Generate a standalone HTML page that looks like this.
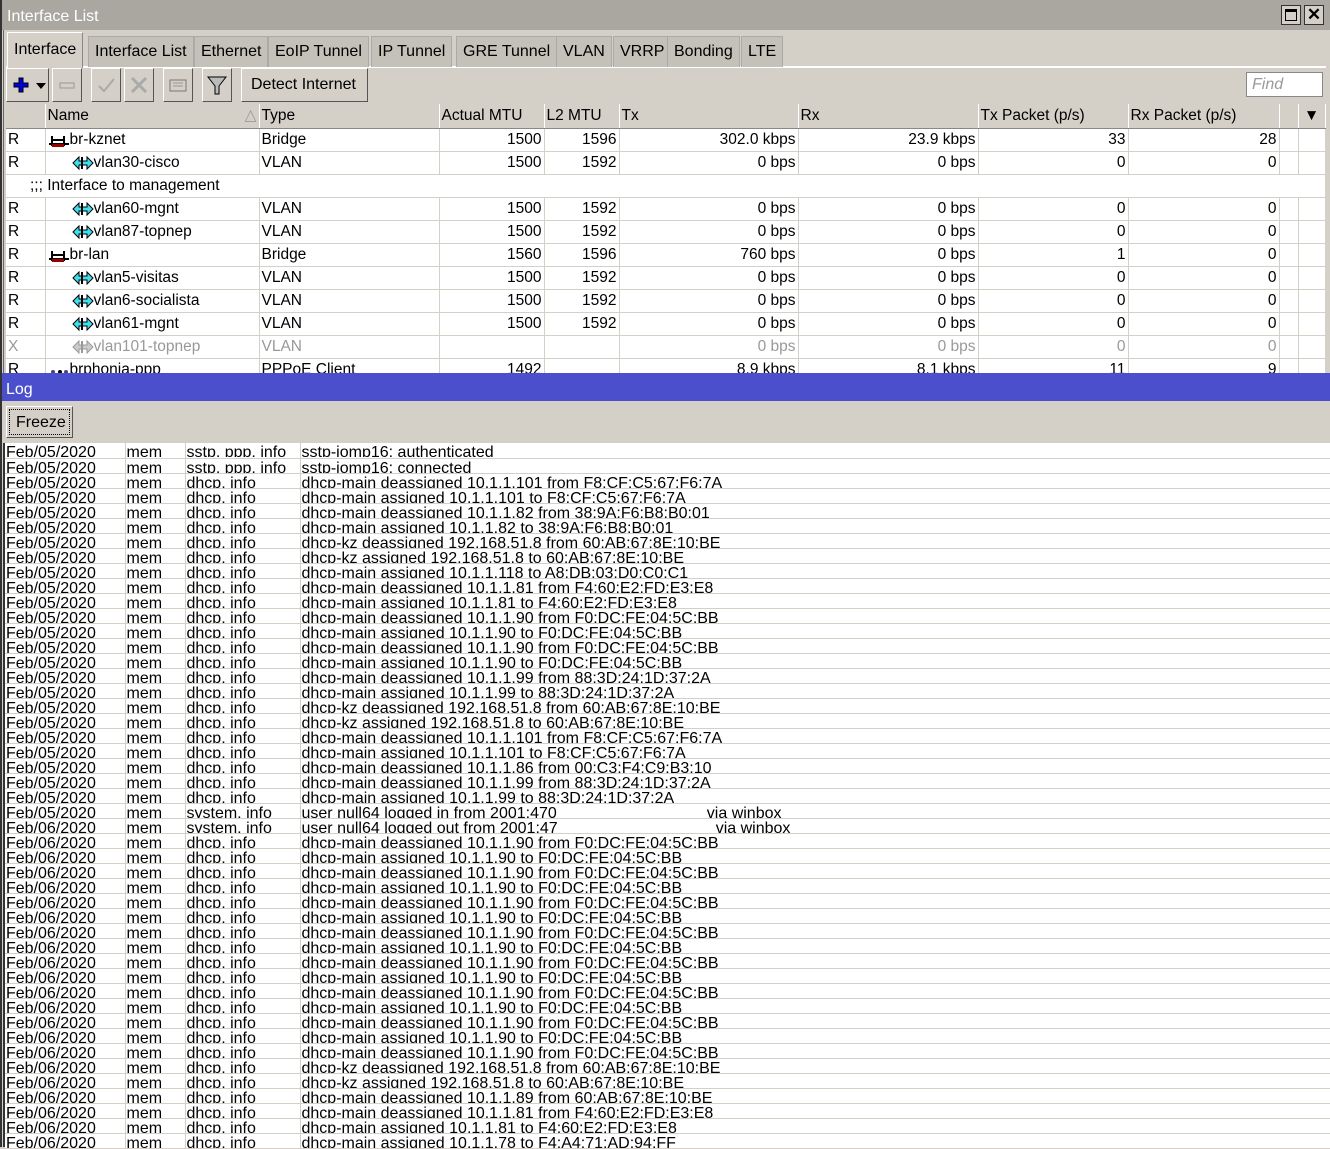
<!DOCTYPE html>
<html><head><meta charset="utf-8"><style>
*{box-sizing:border-box;margin:0;padding:0}
body{width:1330px;height:1147px;overflow:hidden;background:#d4d0c8;font-family:"Liberation Sans",sans-serif;font-size:15.5px;color:#000;position:relative}
.abs{position:absolute}
#title{left:0;top:0;width:1330px;height:30px;background:#a9a7a0;color:#fff;font-size:16px;padding:8px 0 0 7px}
.wb{top:5px;width:20px;height:20px;border:1px solid #333;background:#d4d0c8}
.tab{top:36px;height:31px;background:#c4c1b9;border:1px solid #aaa;border-bottom:none;padding:6px 6px 0;font-size:16px}
.tab.act{top:32px;height:36px;background:#d4d0c8;border-color:#fff #888 transparent #fff;padding-top:8px}
.btn{top:68px;height:34px;border:1px solid #fff;border-right-color:#555;border-bottom-color:#555;background:#d4d0c8}
table{border-collapse:collapse;table-layout:fixed;position:absolute}
#grid td{height:23px;border-right:1px solid #d4d0c8;border-bottom:1px solid #d4d0c8;white-space:nowrap;overflow:hidden;padding:0 2px;background:#fff;line-height:20px}
#grid tr.h td{background:#d4d0c8;border-right:1px solid #fff;border-bottom:1px solid #888;height:24px;line-height:24px}
.r{text-align:right}
.dis td{color:#999}
#log td{height:15px;border-right:1px solid #d4d0c8;border-bottom:1px solid #d4d0c8;white-space:nowrap;overflow:hidden;padding:0 1px;background:#fff;font-size:16px;line-height:19px;vertical-align:top}
#log td div{height:14px;overflow:hidden;line-height:19px}
svg{vertical-align:middle}
</style></head><body>
<div id="title" class="abs">Interface List</div>
<div class="abs wb" style="left:1281px"><div style="margin:3px;width:12px;height:12px;border:1px solid #000;border-top-width:3px"></div></div>
<div class="abs wb" style="left:1304px;font-size:17px;font-weight:bold;text-align:center;line-height:17px">✕</div>
<div class="abs" style="left:6px;top:66px;width:1320px;height:2px;background:#fff"></div>
<div class="abs tab act" style="left:7px">Interface</div>
<div class="abs tab" style="left:88px">Interface List</div>
<div class="abs tab" style="left:194px">Ethernet</div>
<div class="abs tab" style="left:268px">EoIP Tunnel</div>
<div class="abs tab" style="left:371px">IP Tunnel</div>
<div class="abs tab" style="left:456px">GRE Tunnel</div>
<div class="abs tab" style="left:556px">VLAN</div>
<div class="abs tab" style="left:613px">VRRP</div>
<div class="abs tab" style="left:667px">Bonding</div>
<div class="abs tab" style="left:741px">LTE</div>
<div class="abs btn" style="left:6px;width:43px"><svg width="40" height="32"><path d="M12 9h4v5h5v4h-5v5h-4v-5H7v-4h5z" fill="#0000e0" stroke="#000" stroke-width="1"/><path d="M29 14h10l-5 6z" fill="#000"/></svg></div>
<div class="abs btn" style="left:52px;width:30px"><svg width="28" height="32"><rect x="7" y="14" width="14" height="5" fill="none" stroke="#999"/></svg></div>
<div class="abs btn" style="left:91px;width:30px"><svg width="28" height="32"><path d="M7 17l5 5 10-12" fill="none" stroke="#aaa" stroke-width="2"/></svg></div>
<div class="abs btn" style="left:124px;width:30px"><svg width="28" height="32"><path d="M7 9l14 14M21 9L7 23" stroke="#aaa" stroke-width="3"/></svg></div>
<div class="abs btn" style="left:163px;width:30px"><svg width="28" height="32"><rect x="6" y="11" width="16" height="11" fill="none" stroke="#777"/><path d="M9 14h10M9 17h10" stroke="#999"/></svg></div>
<div class="abs btn" style="left:202px;width:30px"><svg width="28" height="32"><path d="M5 8h18l-7 9v8h-4v-8z" fill="#bbb" stroke="#000"/></svg></div>
<div class="abs btn" style="left:241px;width:127px;padding:7px 0 0 9px;font-size:16px">Detect Internet</div>
<div class="abs" style="left:1246px;top:72px;width:77px;height:25px;background:#fff;border:1px solid #888;color:#999;font-style:italic;font-size:16px;padding:3px 5px">Find</div>

<table id="grid" style="left:6px;top:104px;width:1319px">
<colgroup><col width="39"><col width="214"><col width="180"><col width="105"><col width="75"><col width="179"><col width="180"><col width="150"><col width="151"><col width="19"><col width="27"></colgroup>
<tr class="h"><td></td><td>Name<span style="float:right;color:#999">△</span></td><td>Type</td><td>Actual MTU</td><td>L2 MTU</td><td>Tx</td><td>Rx</td><td>Tx Packet (p/s)</td><td>Rx Packet (p/s)</td><td></td><td style="text-align:center">▼</td></tr>
<tr><td>R</td><td><svg width="22" height="14"><path d="M1 11h20M4 3v10M16 3v10M4 7h12" stroke="#000" stroke-width="2" fill="none"/><rect x="4" y="11" width="12" height="3" fill="#900"/></svg>br-kznet</td><td>Bridge</td><td class="r">1500</td><td class="r">1596</td><td class="r">302.0 kbps</td><td class="r">23.9 kbps</td><td class="r">33</td><td class="r">28</td><td></td><td></td></tr>
<tr><td>R</td><td style="padding-left:26px"><svg width="22" height="16"><path d="M1 8l6-6v4h8V2l6 6-6 6v-4H7v4z" fill="#3ee0f0" stroke="#000"/><path d="M10 2v12" stroke="#000" stroke-width="2"/></svg>vlan30-cisco</td><td>VLAN</td><td class="r">1500</td><td class="r">1592</td><td class="r">0 bps</td><td class="r">0 bps</td><td class="r">0</td><td class="r">0</td><td></td><td></td></tr>
<tr><td colspan="11" style="padding-left:24px">;;; Interface to management</td></tr>
<tr><td>R</td><td style="padding-left:26px"><svg width="22" height="16"><path d="M1 8l6-6v4h8V2l6 6-6 6v-4H7v4z" fill="#3ee0f0" stroke="#000"/><path d="M10 2v12" stroke="#000" stroke-width="2"/></svg>vlan60-mgnt</td><td>VLAN</td><td class="r">1500</td><td class="r">1592</td><td class="r">0 bps</td><td class="r">0 bps</td><td class="r">0</td><td class="r">0</td><td></td><td></td></tr>
<tr><td>R</td><td style="padding-left:26px"><svg width="22" height="16"><path d="M1 8l6-6v4h8V2l6 6-6 6v-4H7v4z" fill="#3ee0f0" stroke="#000"/><path d="M10 2v12" stroke="#000" stroke-width="2"/></svg>vlan87-topnep</td><td>VLAN</td><td class="r">1500</td><td class="r">1592</td><td class="r">0 bps</td><td class="r">0 bps</td><td class="r">0</td><td class="r">0</td><td></td><td></td></tr>
<tr><td>R</td><td><svg width="22" height="14"><path d="M1 11h20M4 3v10M16 3v10M4 7h12" stroke="#000" stroke-width="2" fill="none"/><rect x="4" y="11" width="12" height="3" fill="#900"/></svg>br-lan</td><td>Bridge</td><td class="r">1560</td><td class="r">1596</td><td class="r">760 bps</td><td class="r">0 bps</td><td class="r">1</td><td class="r">0</td><td></td><td></td></tr>
<tr><td>R</td><td style="padding-left:26px"><svg width="22" height="16"><path d="M1 8l6-6v4h8V2l6 6-6 6v-4H7v4z" fill="#3ee0f0" stroke="#000"/><path d="M10 2v12" stroke="#000" stroke-width="2"/></svg>vlan5-visitas</td><td>VLAN</td><td class="r">1500</td><td class="r">1592</td><td class="r">0 bps</td><td class="r">0 bps</td><td class="r">0</td><td class="r">0</td><td></td><td></td></tr>
<tr><td>R</td><td style="padding-left:26px"><svg width="22" height="16"><path d="M1 8l6-6v4h8V2l6 6-6 6v-4H7v4z" fill="#3ee0f0" stroke="#000"/><path d="M10 2v12" stroke="#000" stroke-width="2"/></svg>vlan6-socialista</td><td>VLAN</td><td class="r">1500</td><td class="r">1592</td><td class="r">0 bps</td><td class="r">0 bps</td><td class="r">0</td><td class="r">0</td><td></td><td></td></tr>
<tr><td>R</td><td style="padding-left:26px"><svg width="22" height="16"><path d="M1 8l6-6v4h8V2l6 6-6 6v-4H7v4z" fill="#3ee0f0" stroke="#000"/><path d="M10 2v12" stroke="#000" stroke-width="2"/></svg>vlan61-mgnt</td><td>VLAN</td><td class="r">1500</td><td class="r">1592</td><td class="r">0 bps</td><td class="r">0 bps</td><td class="r">0</td><td class="r">0</td><td></td><td></td></tr>
<tr class="dis"><td>X</td><td style="padding-left:26px"><svg width="22" height="16"><path d="M1 8l6-6v4h8V2l6 6-6 6v-4H7v4z" fill="#ccc" stroke="#999"/><path d="M10 2v12" stroke="#999" stroke-width="2"/></svg>vlan101-topnep</td><td>VLAN</td><td></td><td></td><td class="r">0 bps</td><td class="r">0 bps</td><td class="r">0</td><td class="r">0</td><td></td><td></td></tr>
<tr><td>R</td><td><svg width="22" height="14"><circle cx="5" cy="9" r="2" fill="#448"/><circle cx="12" cy="9" r="2" fill="#000"/><circle cx="18" cy="9" r="2" fill="#448"/></svg>brphonia-ppp</td><td>PPPoE Client</td><td class="r">1492</td><td></td><td class="r">8.9 kbps</td><td class="r">8.1 kbps</td><td class="r">11</td><td class="r">9</td><td></td><td></td></tr>
</table>

<div class="abs" style="left:0;top:373px;width:1330px;height:28px;background:#4c4fcc;color:#fff;font-size:16px;padding:8px 0 0 6px">Log</div>
<div class="abs" style="left:0;top:401px;width:1330px;height:746px;background:#d4d0c8"></div>
<div class="abs" style="left:6px;top:406px;width:67px;height:32px;border:1px solid #fff;border-right-color:#555;border-bottom-color:#555;outline:1px dotted #000;outline-offset:-4px;padding:7px 0 0 9px;font-size:16px">Freeze</div>

<table id="log" style="left:5px;top:443px;width:1325px">
<colgroup><col width="120"><col width="60"><col width="115"><col width="1030"></colgroup>
<tr><td><div>Feb/05/2020</div></td><td><div>mem</div></td><td><div>sstp, ppp, info</div></td><td><div>sstp-iomp16: authenticated</div></td></tr>
<tr><td><div>Feb/05/2020</div></td><td><div>mem</div></td><td><div>sstp, ppp, info</div></td><td><div>sstp-iomp16: connected</div></td></tr>
<tr><td><div>Feb/05/2020</div></td><td><div>mem</div></td><td><div>dhcp, info</div></td><td><div>dhcp-main deassigned 10.1.1.101 from F8:CF:C5:67:F6:7A</div></td></tr>
<tr><td><div>Feb/05/2020</div></td><td><div>mem</div></td><td><div>dhcp, info</div></td><td><div>dhcp-main assigned 10.1.1.101 to F8:CF:C5:67:F6:7A</div></td></tr>
<tr><td><div>Feb/05/2020</div></td><td><div>mem</div></td><td><div>dhcp, info</div></td><td><div>dhcp-main deassigned 10.1.1.82 from 38:9A:F6:B8:B0:01</div></td></tr>
<tr><td><div>Feb/05/2020</div></td><td><div>mem</div></td><td><div>dhcp, info</div></td><td><div>dhcp-main assigned 10.1.1.82 to 38:9A:F6:B8:B0:01</div></td></tr>
<tr><td><div>Feb/05/2020</div></td><td><div>mem</div></td><td><div>dhcp, info</div></td><td><div>dhcp-kz deassigned 192.168.51.8 from 60:AB:67:8E:10:BE</div></td></tr>
<tr><td><div>Feb/05/2020</div></td><td><div>mem</div></td><td><div>dhcp, info</div></td><td><div>dhcp-kz assigned 192.168.51.8 to 60:AB:67:8E:10:BE</div></td></tr>
<tr><td><div>Feb/05/2020</div></td><td><div>mem</div></td><td><div>dhcp, info</div></td><td><div>dhcp-main assigned 10.1.1.118 to A8:DB:03:D0:C0:C1</div></td></tr>
<tr><td><div>Feb/05/2020</div></td><td><div>mem</div></td><td><div>dhcp, info</div></td><td><div>dhcp-main deassigned 10.1.1.81 from F4:60:E2:FD:E3:E8</div></td></tr>
<tr><td><div>Feb/05/2020</div></td><td><div>mem</div></td><td><div>dhcp, info</div></td><td><div>dhcp-main assigned 10.1.1.81 to F4:60:E2:FD:E3:E8</div></td></tr>
<tr><td><div>Feb/05/2020</div></td><td><div>mem</div></td><td><div>dhcp, info</div></td><td><div>dhcp-main deassigned 10.1.1.90 from F0:DC:FE:04:5C:BB</div></td></tr>
<tr><td><div>Feb/05/2020</div></td><td><div>mem</div></td><td><div>dhcp, info</div></td><td><div>dhcp-main assigned 10.1.1.90 to F0:DC:FE:04:5C:BB</div></td></tr>
<tr><td><div>Feb/05/2020</div></td><td><div>mem</div></td><td><div>dhcp, info</div></td><td><div>dhcp-main deassigned 10.1.1.90 from F0:DC:FE:04:5C:BB</div></td></tr>
<tr><td><div>Feb/05/2020</div></td><td><div>mem</div></td><td><div>dhcp, info</div></td><td><div>dhcp-main assigned 10.1.1.90 to F0:DC:FE:04:5C:BB</div></td></tr>
<tr><td><div>Feb/05/2020</div></td><td><div>mem</div></td><td><div>dhcp, info</div></td><td><div>dhcp-main deassigned 10.1.1.99 from 88:3D:24:1D:37:2A</div></td></tr>
<tr><td><div>Feb/05/2020</div></td><td><div>mem</div></td><td><div>dhcp, info</div></td><td><div>dhcp-main assigned 10.1.1.99 to 88:3D:24:1D:37:2A</div></td></tr>
<tr><td><div>Feb/05/2020</div></td><td><div>mem</div></td><td><div>dhcp, info</div></td><td><div>dhcp-kz deassigned 192.168.51.8 from 60:AB:67:8E:10:BE</div></td></tr>
<tr><td><div>Feb/05/2020</div></td><td><div>mem</div></td><td><div>dhcp, info</div></td><td><div>dhcp-kz assigned 192.168.51.8 to 60:AB:67:8E:10:BE</div></td></tr>
<tr><td><div>Feb/05/2020</div></td><td><div>mem</div></td><td><div>dhcp, info</div></td><td><div>dhcp-main deassigned 10.1.1.101 from F8:CF:C5:67:F6:7A</div></td></tr>
<tr><td><div>Feb/05/2020</div></td><td><div>mem</div></td><td><div>dhcp, info</div></td><td><div>dhcp-main assigned 10.1.1.101 to F8:CF:C5:67:F6:7A</div></td></tr>
<tr><td><div>Feb/05/2020</div></td><td><div>mem</div></td><td><div>dhcp, info</div></td><td><div>dhcp-main deassigned 10.1.1.86 from 00:C3:F4:C9:B3:10</div></td></tr>
<tr><td><div>Feb/05/2020</div></td><td><div>mem</div></td><td><div>dhcp, info</div></td><td><div>dhcp-main deassigned 10.1.1.99 from 88:3D:24:1D:37:2A</div></td></tr>
<tr><td><div>Feb/05/2020</div></td><td><div>mem</div></td><td><div>dhcp, info</div></td><td><div>dhcp-main assigned 10.1.1.99 to 88:3D:24:1D:37:2A</div></td></tr>
<tr><td><div>Feb/05/2020</div></td><td><div>mem</div></td><td><div>system, info</div></td><td><div>user null64 logged in from 2001:470<span style="display:inline-block;width:150px"></span>via winbox</div></td></tr>
<tr><td><div>Feb/06/2020</div></td><td><div>mem</div></td><td><div>system, info</div></td><td><div>user null64 logged out from 2001:47<span style="display:inline-block;width:158px"></span>via winbox</div></td></tr>
<tr><td><div>Feb/06/2020</div></td><td><div>mem</div></td><td><div>dhcp, info</div></td><td><div>dhcp-main deassigned 10.1.1.90 from F0:DC:FE:04:5C:BB</div></td></tr>
<tr><td><div>Feb/06/2020</div></td><td><div>mem</div></td><td><div>dhcp, info</div></td><td><div>dhcp-main assigned 10.1.1.90 to F0:DC:FE:04:5C:BB</div></td></tr>
<tr><td><div>Feb/06/2020</div></td><td><div>mem</div></td><td><div>dhcp, info</div></td><td><div>dhcp-main deassigned 10.1.1.90 from F0:DC:FE:04:5C:BB</div></td></tr>
<tr><td><div>Feb/06/2020</div></td><td><div>mem</div></td><td><div>dhcp, info</div></td><td><div>dhcp-main assigned 10.1.1.90 to F0:DC:FE:04:5C:BB</div></td></tr>
<tr><td><div>Feb/06/2020</div></td><td><div>mem</div></td><td><div>dhcp, info</div></td><td><div>dhcp-main deassigned 10.1.1.90 from F0:DC:FE:04:5C:BB</div></td></tr>
<tr><td><div>Feb/06/2020</div></td><td><div>mem</div></td><td><div>dhcp, info</div></td><td><div>dhcp-main assigned 10.1.1.90 to F0:DC:FE:04:5C:BB</div></td></tr>
<tr><td><div>Feb/06/2020</div></td><td><div>mem</div></td><td><div>dhcp, info</div></td><td><div>dhcp-main deassigned 10.1.1.90 from F0:DC:FE:04:5C:BB</div></td></tr>
<tr><td><div>Feb/06/2020</div></td><td><div>mem</div></td><td><div>dhcp, info</div></td><td><div>dhcp-main assigned 10.1.1.90 to F0:DC:FE:04:5C:BB</div></td></tr>
<tr><td><div>Feb/06/2020</div></td><td><div>mem</div></td><td><div>dhcp, info</div></td><td><div>dhcp-main deassigned 10.1.1.90 from F0:DC:FE:04:5C:BB</div></td></tr>
<tr><td><div>Feb/06/2020</div></td><td><div>mem</div></td><td><div>dhcp, info</div></td><td><div>dhcp-main assigned 10.1.1.90 to F0:DC:FE:04:5C:BB</div></td></tr>
<tr><td><div>Feb/06/2020</div></td><td><div>mem</div></td><td><div>dhcp, info</div></td><td><div>dhcp-main deassigned 10.1.1.90 from F0:DC:FE:04:5C:BB</div></td></tr>
<tr><td><div>Feb/06/2020</div></td><td><div>mem</div></td><td><div>dhcp, info</div></td><td><div>dhcp-main assigned 10.1.1.90 to F0:DC:FE:04:5C:BB</div></td></tr>
<tr><td><div>Feb/06/2020</div></td><td><div>mem</div></td><td><div>dhcp, info</div></td><td><div>dhcp-main deassigned 10.1.1.90 from F0:DC:FE:04:5C:BB</div></td></tr>
<tr><td><div>Feb/06/2020</div></td><td><div>mem</div></td><td><div>dhcp, info</div></td><td><div>dhcp-main assigned 10.1.1.90 to F0:DC:FE:04:5C:BB</div></td></tr>
<tr><td><div>Feb/06/2020</div></td><td><div>mem</div></td><td><div>dhcp, info</div></td><td><div>dhcp-main deassigned 10.1.1.90 from F0:DC:FE:04:5C:BB</div></td></tr>
<tr><td><div>Feb/06/2020</div></td><td><div>mem</div></td><td><div>dhcp, info</div></td><td><div>dhcp-kz deassigned 192.168.51.8 from 60:AB:67:8E:10:BE</div></td></tr>
<tr><td><div>Feb/06/2020</div></td><td><div>mem</div></td><td><div>dhcp, info</div></td><td><div>dhcp-kz assigned 192.168.51.8 to 60:AB:67:8E:10:BE</div></td></tr>
<tr><td><div>Feb/06/2020</div></td><td><div>mem</div></td><td><div>dhcp, info</div></td><td><div>dhcp-main deassigned 10.1.1.89 from 60:AB:67:8E:10:BE</div></td></tr>
<tr><td><div>Feb/06/2020</div></td><td><div>mem</div></td><td><div>dhcp, info</div></td><td><div>dhcp-main deassigned 10.1.1.81 from F4:60:E2:FD:E3:E8</div></td></tr>
<tr><td><div>Feb/06/2020</div></td><td><div>mem</div></td><td><div>dhcp, info</div></td><td><div>dhcp-main assigned 10.1.1.81 to F4:60:E2:FD:E3:E8</div></td></tr>
<tr><td><div>Feb/06/2020</div></td><td><div>mem</div></td><td><div>dhcp, info</div></td><td><div>dhcp-main assigned 10.1.1.78 to F4:A4:71:AD:94:FF</div></td></tr>
</table>
<div class="abs" style="left:0;top:0;width:2px;height:1147px;background:#333"></div>
<div class="abs" style="left:3px;top:30px;width:1px;height:343px;background:#666"></div>
<div class="abs" style="left:3px;top:443px;width:2px;height:704px;background:#333"></div>
</body></html>
